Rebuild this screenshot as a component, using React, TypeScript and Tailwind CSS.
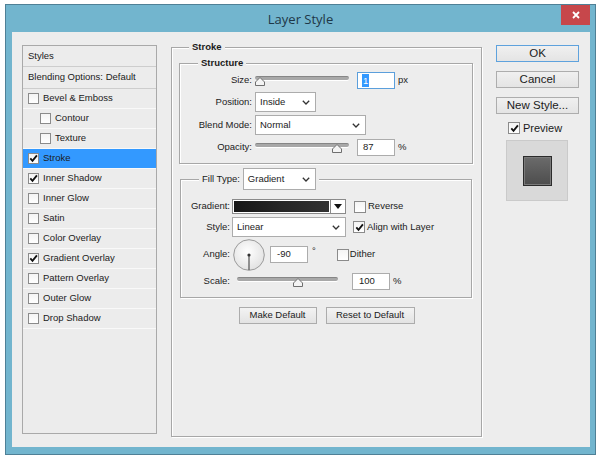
import React from "react";

const Check = ({ s = 9 }: { s?: number }) => (
  <svg width={s} height={s} viewBox="0 0 9 9">
    <path d="M1.3 4.4 L3.5 6.9 L7.9 1.4" fill="none" stroke="#111" strokeWidth="1.8" />
  </svg>
);

function Checkbox({ checked, cls = "w-[11px] h-[11px]" }: { checked?: boolean; cls?: string }) {
  return (
    <span className={`flex items-center justify-center shrink-0 border border-[#8b8b8b] bg-gradient-to-b from-[#f4f4f4] to-white ${cls}`}>
      {checked && <Check />}
    </span>
  );
}

function Slider({ w, thumb }: { w: string; thumb: string }) {
  return (
    <div className={`relative h-[11px] shrink-0 ${w}`}>
      <div className="mt-[2px] h-[4px] rounded-full bg-[#a8a8a8] border-t border-[#868686] shadow-[0_1px_0_#ffffff]" />
      <svg className={`absolute top-[1px] ${thumb}`} width="10" height="9" viewBox="0 0 10 9">
        <path d="M0.5 8.5 V5 L5 0.5 L9.5 5 V8.5 Z" fill="#f4f4f4" stroke="#6f6f6f" />
      </svg>
    </div>
  );
}

function Select({ label, cls }: { label: string; cls: string }) {
  return (
    <div className={`flex items-center justify-between shrink-0 bg-white border border-[#acacac] pl-[4px] pr-[5px] ${cls}`}>
      <span>{label}</span>
      <svg width="8" height="5" viewBox="0 0 8 5">
        <path d="M0.8 0.8 L4 4 L7.2 0.8" fill="none" stroke="#333" strokeWidth="1.3" />
      </svg>
    </div>
  );
}

function Input({ children, cls = "" }: { children: React.ReactNode; cls?: string }) {
  return (
    <div className={`flex items-center shrink-0 bg-white h-[17px] ${cls}`}>{children}</div>
  );
}

const listItems: { label: string; indent?: boolean; checked?: boolean; selected?: boolean }[] = [
  { label: "Bevel & Emboss" },
  { label: "Contour", indent: true },
  { label: "Texture", indent: true },
  { label: "Stroke", checked: true, selected: true },
  { label: "Inner Shadow", checked: true },
  { label: "Inner Glow" },
  { label: "Satin" },
  { label: "Color Overlay" },
  { label: "Gradient Overlay", checked: true },
  { label: "Pattern Overlay" },
  { label: "Outer Glow" },
  { label: "Drop Shadow" },
];

export default function App() {
  return (
    <div className="w-[600px] h-[459px] bg-white overflow-hidden font-['Liberation_Sans',Arial,sans-serif] text-[9.5px] text-[#1b1b1b]">
      <div className="ml-[5px] mt-[4px] w-[591px] h-[451px] bg-[#72b5ce] border border-[#4f8096] flex flex-col">
        {/* title bar */}
        <div className="relative h-[27px] shrink-0 flex items-center justify-center">
          <span className="font-['Open_Sans',sans-serif] text-[13px] text-[#1e3747] mt-[2px]">Layer Style</span>
          <div className="absolute right-[5px] top-0 w-[29px] h-[20px] bg-[#c7474b] flex items-center justify-center">
            <svg width="8" height="8" viewBox="0 0 8 8">
              <path d="M1 1 L7 7 M7 1 L1 7" stroke="#fff" strokeWidth="1.8" />
            </svg>
          </div>
        </div>
        {/* content */}
        <div className="ml-[6px] w-[578px] h-[415px] bg-[#ededed] flex items-start pt-[13px] pl-[10px]">
          {/* styles list */}
          <div className="w-[135px] h-[389px] border border-[#a9a9a9] bg-[#ececec] shrink-0 flex flex-col">
            <div className="h-[21px] border-b border-[#cdcdcd] flex items-center pl-[5px]">Styles</div>
            <div className="h-[22px] border-b border-[#cdcdcd] flex items-center pl-[5px]">Blending Options: Default</div>
            {listItems.map((it) => (
              <div
                key={it.label}
                className={`h-[20px] border-b border-[#f9f9f9] flex items-center gap-[4px] ${it.indent ? "pl-[17px]" : "pl-[5px]"} ${it.selected ? "bg-[#3399ff]" : ""}`}
              >
                <Checkbox checked={it.checked} />
                <span>{it.label}</span>
              </div>
            ))}
          </div>

          {/* middle stroke group */}
          <fieldset className="ml-[14px] -mt-[4px] w-[311px] h-[396px] shrink-0 border border-[#a7a7a7] shadow-[inset_1px_1px_0_#fff,1px_1px_0_#fff] flex flex-col">
            <legend className="ml-[17px] px-[3px] font-bold leading-[12px] bg-[#ededed]">Stroke</legend>

            {/* Structure */}
            <fieldset className="mt-[4px] mx-[7px] w-[294px] border border-[#a7a7a7] shadow-[inset_1px_1px_0_#fff,1px_1px_0_#fff] pb-[7px]">
              <legend className="ml-[18px] px-[3px] font-bold leading-[12px] bg-[#ededed]">Structure</legend>
              <div className="mt-[3px] h-[17px] flex items-center">
                <span className="w-[72px] text-right shrink-0">Size:</span>
                <div className="ml-[3px]"><Slider w="w-[94px]" thumb="left-[0px]" /></div>
                <Input cls="ml-[8px] w-[38px] border border-[#5b9fdc] pl-[4px]">
                  <span className="bg-[#3399ff] text-white px-[1px] leading-[13px]">1</span>
                </Input>
                <span className="ml-[3px]">px</span>
              </div>
              <div className="mt-[3px] h-[20px] flex items-center">
                <span className="w-[72px] text-right shrink-0">Position:</span>
                <Select label="Inside" cls="ml-[3px] w-[61px] h-[20px]" />
              </div>
              <div className="mt-[3px] h-[20px] flex items-center">
                <span className="w-[72px] text-right shrink-0">Blend Mode:</span>
                <Select label="Normal" cls="ml-[3px] w-[111px] h-[20px]" />
              </div>
              <div className="mt-[4px] h-[17px] flex items-center">
                <span className="w-[72px] text-right shrink-0">Opacity:</span>
                <div className="ml-[3px]"><Slider w="w-[94px]" thumb="left-[77px]" /></div>
                <Input cls="ml-[8px] w-[38px] border border-[#acacac] pl-[5px]">87</Input>
                <span className="ml-[3px]">%</span>
              </div>
            </fieldset>

            {/* Fill */}
            <fieldset className="mt-[4px] ml-[8px] w-[292px] border border-[#a7a7a7] shadow-[inset_1px_1px_0_#fff,1px_1px_0_#fff] pb-[7px]">
              <legend className="ml-[18px] pl-[3px] pr-[3px] bg-[#ededed] flex items-center h-[22px]">
                <span>Fill Type:</span>
                <Select label="Gradient" cls="ml-[3px] w-[73px] h-[22px]" />
              </legend>
              <div className="mt-[9px] h-[15px] flex items-center">
                <span className="w-[49px] text-right shrink-0">Gradient:</span>
                <div className="ml-[2px] w-[114px] h-[15px] flex border border-[#8a8a8a] bg-white shrink-0">
                  <div className="flex-1 m-[1px] bg-gradient-to-r from-[#161616] via-[#262626] to-[#323232]" />
                  <div className="w-[15px] border-l border-[#8a8a8a] flex items-center justify-center">
                    <svg width="8" height="5" viewBox="0 0 8 5"><path d="M0 0 H8 L4 5 Z" fill="#111" /></svg>
                  </div>
                </div>
                <div className="ml-[8px]"><Checkbox cls="w-[12px] h-[12px]" /></div>
                <span className="ml-[2px]">Reverse</span>
              </div>
              <div className="mt-[3px] h-[20px] flex items-center">
                <span className="w-[49px] text-right shrink-0">Style:</span>
                <Select label="Linear" cls="ml-[2px] w-[114px] h-[20px]" />
                <div className="ml-[7px]"><Checkbox checked cls="w-[12px] h-[12px]" /></div>
                <span className="ml-[2px]">Align with Layer</span>
              </div>
              <div className="mt-[2px] h-[31px] flex items-center">
                <span className="w-[49px] text-right shrink-0">Angle:</span>
                <svg className="ml-[3px] shrink-0" width="32" height="32" viewBox="0 0 32 32">
                  <defs>
                    <radialGradient id="dial" cx="0.45" cy="0.4" r="0.6">
                      <stop offset="0" stopColor="#ffffff" />
                      <stop offset="1" stopColor="#e2e2e2" />
                    </radialGradient>
                  </defs>
                  <circle cx="16" cy="16" r="15.3" fill="url(#dial)" stroke="#9a9a9a" />
                  <line x1="16" y1="16" x2="16" y2="31" stroke="#333" strokeWidth="1" />
                  <circle cx="16" cy="16" r="1.6" fill="#333" />
                </svg>
                <Input cls="ml-[5px] w-[38px] border border-[#acacac] pl-[6px]">-90</Input>
                <span className="ml-[4px] self-start mt-[8px] leading-[8px]">°</span>
                <div className="ml-[21px]"><Checkbox cls="w-[12px] h-[12px]" /></div>
                <span className="ml-[1px]">Dither</span>
              </div>
              <div className="mt-[3px] h-[17px] flex items-center">
                <span className="w-[49px] text-right shrink-0">Scale:</span>
                <div className="ml-[7px]"><Slider w="w-[101px]" thumb="left-[56px]" /></div>
                <Input cls="ml-[14px] w-[38px] border border-[#acacac] pl-[6px]">100</Input>
                <span className="ml-[3px]">%</span>
              </div>
            </fieldset>

            <div className="mt-[9px] flex justify-center gap-[9px]">
              <div className="w-[78px] h-[17px] flex items-center justify-center border border-[#acacac] bg-gradient-to-b from-[#f3f3f3] to-[#e3e3e3]">Make Default</div>
              <div className="w-[89px] h-[17px] flex items-center justify-center border border-[#acacac] bg-gradient-to-b from-[#f3f3f3] to-[#e3e3e3]">Reset to Default</div>
            </div>
          </fieldset>

          {/* right column */}
          <div className="ml-[14px] w-[83px] shrink-0 flex flex-col text-[11.5px]">
            <div className="h-[17px] flex items-center justify-center border border-[#5ea2dd] bg-gradient-to-b from-[#f0f0f0] to-[#e4e4e4]">OK</div>
            <div className="mt-[9px] h-[17px] flex items-center justify-center border border-[#adadad] bg-gradient-to-b from-[#f0f0f0] to-[#e4e4e4]">Cancel</div>
            <div className="mt-[9px] h-[17px] flex items-center justify-center border border-[#adadad] bg-gradient-to-b from-[#f0f0f0] to-[#e4e4e4]">New Style...</div>
            <div className="mt-[8px] h-[12px] flex items-center pl-[12px] text-[11px]">
              <Checkbox checked cls="w-[12px] h-[12px]" />
              <span className="ml-[3px]">Preview</span>
            </div>
            <div className="mt-[6px] ml-[10px] w-[62px] h-[61px] bg-[#d9d9d9] border border-[#cacaca] flex items-center justify-center">
              <div className="w-[29px] h-[30px] border border-[#2b2b2b] p-[1px] bg-[#7a7a7a]">
                <div className="w-full h-full bg-gradient-to-b from-[#6a6a6a] to-[#4e4e4e]" />
              </div>
            </div>
          </div>
        </div>
      </div>
    </div>
  );
}
